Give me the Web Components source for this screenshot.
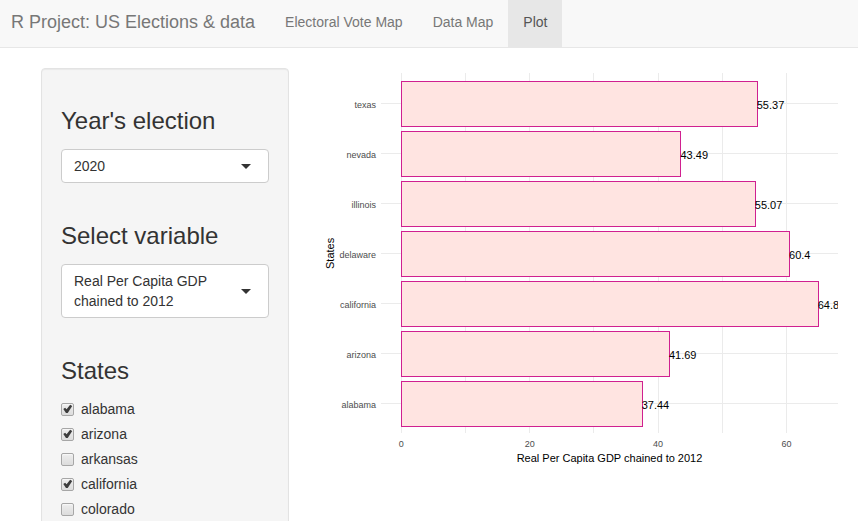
<!DOCTYPE html>
<html lang="en">
<head>
<meta charset="utf-8">
<title>R Project: US Elections &amp; data</title>
<meta name="viewport" content="width=device-width, initial-scale=1">
<style>
  html { scrollbar-width: none; }
  body { margin: 0; background: #fff; color: #333; font: 14px/20px "Liberation Sans", Arial, sans-serif; }
</style>
</head>
<body>
<election-app></election-app>

<script>
const define = (name, html, setup) => customElements.define(name, class extends HTMLElement {
  connectedCallback() {
    if (this.shadowRoot) return;
    const root = this.attachShadow({ mode: "open" });
    const template = document.createElement("template");
    template.innerHTML = html;
    root.append(template.content.cloneNode(true));
    if (setup) setup(this, root);
  }
});

define("nav-bar", `
  <style>
    :host { display: block; background: #f8f8f8; border-bottom: 1px solid #e7e7e7; }
    nav { display: flex; }
    ::slotted(a) { padding: 12px 15px 15px; color: #777; text-decoration: none; }
    ::slotted(a[slot="brand"]) { padding-left: 11px; font-size: 18px; }
    ::slotted(a[aria-current]) { color: #555; background: #e7e7e7; }
  </style>
  <nav><slot name="brand"></slot><slot></slot></nav>`);

define("well-panel", `
  <style>
    :host { display: block; box-sizing: border-box; padding: 39px 19px 19px; background: #f5f5f5;
      border: 1px solid #e3e3e3; border-radius: 4px; box-shadow: inset 0 1px 1px rgba(0,0,0,.05); }
    div { display: grid; gap: 40px; }
  </style>
  <div><slot></slot></div>`);

define("select-field", `
  <style>
    :host { display: grid; gap: 15px; }
    label { font-size: 24px; line-height: 26px; }
    .box { display: grid; align-items: center; background: #fff; border: 1px solid #ccc; border-radius: 4px; }
    select { grid-area: 1 / 1; appearance: none; width: 100%; margin: 0; padding: 6px 48px 6px 12px; border: 0;
      border-radius: 4px; background: none; color: inherit; font: inherit; line-height: 20px;
      white-space: normal; }
    .caret { grid-area: 1 / 1; justify-self: end; margin-right: 17px; pointer-events: none;
      border: 5px solid transparent; border-top-color: #333; border-bottom: 0; }
  </style>
  <label for="field"><slot></slot></label>
  <div class="box"><select id="field"></select><span class="caret"></span></div>`,
  (host, root) => {
    root.querySelector("select").add(new Option(host.getAttribute("value")));
  });

define("check-item", `
  <style>
    :host { display: block; }
    label { display: flex; align-items: center; gap: 7px; }
    input { appearance: none; box-sizing: border-box; display: grid; width: 13px; height: 13px; margin: 0;
      border: 1px solid #a6a6a6; border-radius: 2px; background: linear-gradient(#ededed, #dcdcdc);
      box-shadow: inset 0 1px 1px #f8f8f8; }
    input:checked::before { content: ""; background: #3c3c3c;
      clip-path: polygon(12% 50%, 28% 38%, 42% 53%, 74% 11%, 93% 23%, 52% 86%, 36% 86%); }
  </style>
  <label><input type="checkbox"><span><slot></slot></span></label>`,
  (host, root) => { root.querySelector("input").checked = host.hasAttribute("checked"); });

define("check-group", `
  <style>
    :host { display: block; }
    fieldset { margin: 0; padding: 0; border: 0; min-width: 0; }
    legend { padding: 0 0 15px; font-size: 24px; line-height: 26px; }
    div { display: grid; gap: 5px; }
  </style>
  <fieldset><legend><slot name="title"></slot></legend><div><slot></slot></div></fieldset>`);

define("bar-plot", `
  <style>
    :host { display: grid; grid-template-columns: 12px 45px minmax(0, 1fr); padding: 5px 7px 7px 5px;
      color: #000; font-size: 11px; line-height: 14px; }
    .ytitle { writing-mode: vertical-rl; transform: rotate(180deg); text-align: center; line-height: 12px; }
    .ylabels { display: grid; grid-auto-rows: 50px; align-items: center; justify-items: end;
      padding: 7px 5px 0 0; color: #4d4d4d; font-size: 9px; white-space: nowrap; }
    .panel { display: grid; overflow: hidden; }
    .panel > * { grid-area: 1 / 1; }
    svg { display: block; width: 100%; height: 100%; shape-rendering: crispEdges; }
    line { stroke: #ebebeb; }
    .rows { display: grid; grid-auto-rows: 50px; padding: 6px 0 4px; z-index: 1; }
    .row { display: flex; align-items: center; min-width: 0; white-space: nowrap; }
    .bar { flex: none; box-sizing: border-box; height: 46px; background: #ffe4e1; border: 1px solid #d02090; }
    .row span { margin-left: -1px; padding-top: 2px; }
    .ticks { grid-column: 3; height: 18px; overflow: visible; }
    .ticks text { fill: #4d4d4d; font-size: 9px; text-anchor: middle; }
    .xtitle { grid-column: 3; text-align: center; }
  </style>
  <div class="ytitle"></div>
  <div class="ylabels"></div>
  <div class="panel"><svg></svg><div class="rows"></div></div>
  <svg class="ticks"></svg>
  <div class="xtitle"></div>`,
  (host, root) => {
    const data = JSON.parse(host.getAttribute("data"));
    const min = -3.17, range = 71.2;
    const pct = v => (v / range * 100).toFixed(3) + "%";
    const at = v => pct(v - min);
    const find = s => root.querySelector(s);
    find(".ytitle").textContent = host.getAttribute("ylabel");
    find(".xtitle").textContent = host.getAttribute("xlabel");
    find(".ylabels").innerHTML = data.map(([name]) => `<span>${name}</span>`).join("");
    find(".panel svg").innerHTML =
      [0, 10, 20, 30, 40, 50, 60].map(v => `<line x1="${at(v)}" x2="${at(v)}" y1="0" y2="100%"/>`).join("") +
      data.map((d, i) => `<line x1="0" x2="100%" y1="${30 + i * 50}" y2="${30 + i * 50}"/>`).join("");
    find(".rows").innerHTML = data.map(([, v]) =>
      `<div class="row"><div class="bar" style="margin-left:${at(0)};width:calc(${pct(v)} + 1px)"></div><span>${v}</span></div>`).join("");
    find(".ticks").innerHTML =
      [0, 20, 40, 60].map(v => `<text x="${at(v)}" y="14">${v}</text>`).join("");
  });

define("election-app", `
  <style>
    :host { display: block; }
    main { display: grid; grid-template-columns: calc((100% + 30px) / 3 - 30px) minmax(0, 1fr); gap: 30px;
      align-items: start; padding: 20px 13px 20px 41px; }
  </style>
  <nav-bar>
    <a slot="brand" href="#home">R Project: US Elections &amp; data</a>
    <a href="#votes">Electoral Vote Map</a>
    <a href="#data">Data Map</a>
    <a href="#plot" aria-current="page">Plot</a>
  </nav-bar>
  <main>
    <well-panel>
      <select-field value="2020">Year's election</select-field>
      <select-field value="Real Per Capita GDP chained to 2012">Select variable</select-field>
      <check-group>
        <span slot="title">States</span>
        <check-item checked>alabama</check-item>
        <check-item checked>arizona</check-item>
        <check-item>arkansas</check-item>
        <check-item checked>california</check-item>
        <check-item>colorado</check-item>
      </check-group>
    </well-panel>
    <bar-plot xlabel="Real Per Capita GDP chained to 2012" ylabel="States"
      data='[["texas",55.37],["nevada",43.49],["illinois",55.07],["delaware",60.4],["california",64.86],["arizona",41.69],["alabama",37.44]]'></bar-plot>
  </main>`);
</script>
</body>
</html>
